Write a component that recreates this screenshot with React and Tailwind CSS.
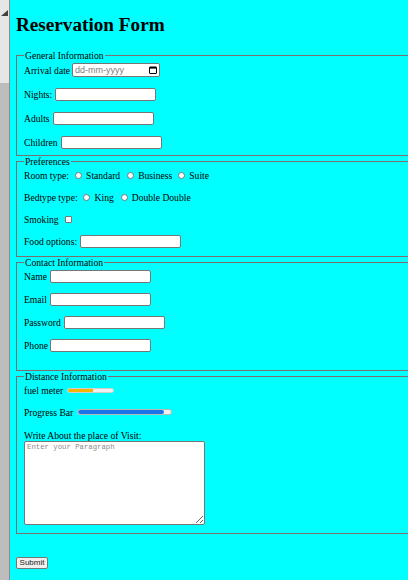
import React from "react";

const serif = "font-['Liberation_Serif',serif]";

function TextBox({ w = "w-[101px]" }) {
  return <input type="text" className={`${w} h-[13px] border border-[#767676] rounded-[2px] bg-white outline-none`} />;
}

function Radio() {
  return <span className="inline-block w-[7px] h-[7px] rounded-full border border-[#767676] bg-white shrink-0" />;
}

function DateBox() {
  return (
    <div className="w-[88px] h-[14px] border border-[#767676] rounded-[2px] bg-white flex items-center justify-between px-[2px]">
      <span className="font-['Liberation_Sans',sans-serif] text-[9px] text-[#808080] leading-none">dd-mm-yyyy</span>
      <svg width="8" height="8" viewBox="0 0 8 8" fill="none">
        <rect x="0.5" y="1" width="7" height="6.5" rx="0.5" stroke="#000" />
        <rect x="0.5" y="1" width="7" height="1.6" fill="#000" />
      </svg>
    </div>
  );
}

function Row({ children, className = "" }) {
  return <div className={`flex items-center h-[14px] whitespace-nowrap ${className}`}>{children}</div>;
}

function Box({ title, children, className = "" }) {
  return (
    <fieldset className={`border border-[#7a7070] mx-0 px-[7px] ${className}`}>
      <legend className="px-[1px] leading-[11px]">{title}</legend>
      {children}
    </fieldset>
  );
}

export default function App() {
  return (
    <div className={`w-[408px] h-[580px] overflow-hidden flex bg-[#00ffff] ${serif} text-[9.6px] leading-[11px] text-black`}>
      <div className="w-[10px] shrink-0 flex flex-col border-r border-[#8c8c8c]">
        <div className="h-[83px] bg-[#e6e6e6] pt-[10px] flex justify-end pr-[1px]">
          <svg width="7" height="6" viewBox="0 0 7 6"><polygon points="0,6 7,6 7,0" fill="#404040" /></svg>
        </div>
        <div className="flex-1 bg-[#bdbdbd]" />
      </div>

      <div className="w-[520px] shrink-0 pl-[6px] pt-[14px]">
        <h1 className="text-[19.2px] leading-[22px] font-bold">Reservation Form</h1>

        <div className="mt-[14px]">
          <Box title="General Information" className="pb-[6px]">
            <div className="flex flex-col gap-[10px] pt-[2px]">
              <Row className="gap-[2px]">Arrival date <DateBox /></Row>
              <Row className="gap-[3px]">Nights: <TextBox /></Row>
              <Row className="gap-[3px]">Adults <TextBox /></Row>
              <Row className="gap-[3px]">Children <TextBox /></Row>
            </div>
          </Box>

          <Box title="Preferences" className="pb-[8px]">
            <div className="flex flex-col gap-[8px] pt-[1px]">
              <Row>
                Room type:
                <span className="ml-[6px] mr-[4px]"><Radio /></span>Standard
                <span className="ml-[7px] mr-[4px]"><Radio /></span>Business
                <span className="ml-[6px] mr-[4px]"><Radio /></span>Suite
              </Row>
              <Row>
                Bedtype type:
                <span className="ml-[5px] mr-[5px]"><Radio /></span>King
                <span className="ml-[7px] mr-[4px]"><Radio /></span>Double Double
              </Row>
              <Row>
                Smoking
                <span className="ml-[6px] w-[7px] h-[7px] border border-[#767676] rounded-[1px] bg-white inline-block" />
              </Row>
              <Row className="gap-[3px]">Food options: <TextBox /></Row>
            </div>
          </Box>

          <Box title="Contact Information" className="pb-[18px]">
            <div className="flex flex-col gap-[9px] pt-[1px]">
              <Row className="gap-[3px]">Name <TextBox /></Row>
              <Row className="gap-[3px]">Email <TextBox /></Row>
              <Row className="gap-[3px]">Password <TextBox /></Row>
              <Row className="gap-[2px]">Phone <TextBox /></Row>
            </div>
          </Box>

          <Box title="Distance Information" className="pb-[8px]">
            <div className="flex flex-col pt-[1px]">
              <Row className="gap-[4px]">
                fuel meter
                <div className="w-[47px] h-[5px] rounded-full bg-[#efefef] border border-[#cfcfcf] overflow-hidden">
                  <div className="w-[25px] h-full bg-[#f4b400]" />
                </div>
              </Row>
              <Row className="gap-[4px] mt-[8px]">
                Progress Bar
                <div className="w-[95px] h-[6px] rounded-full bg-[#efefef] border border-[#b8b8b8] overflow-hidden">
                  <div className="w-[86px] h-full bg-[#1a73e8] rounded-full" />
                </div>
              </Row>
              <div className="mt-[11px]">Write About the place of Visit:</div>
              <textarea
                placeholder="Enter your Paragraph"
                className="w-[181px] h-[84px] border border-[#767676] rounded-[2px] bg-white font-['Liberation_Mono',monospace] text-[7.3px] leading-[9px] px-[2px] py-[1px] placeholder:text-[#8a8a8a] outline-none"
              />
            </div>
          </Box>
        </div>

        <button className="mt-[23px] w-[32px] h-[12px] border border-[#767676] rounded-[2px] bg-[#efefef] font-['Liberation_Sans',sans-serif] text-[8px] leading-none text-[#222]">
          Submit
        </button>
      </div>
    </div>
  );
}
